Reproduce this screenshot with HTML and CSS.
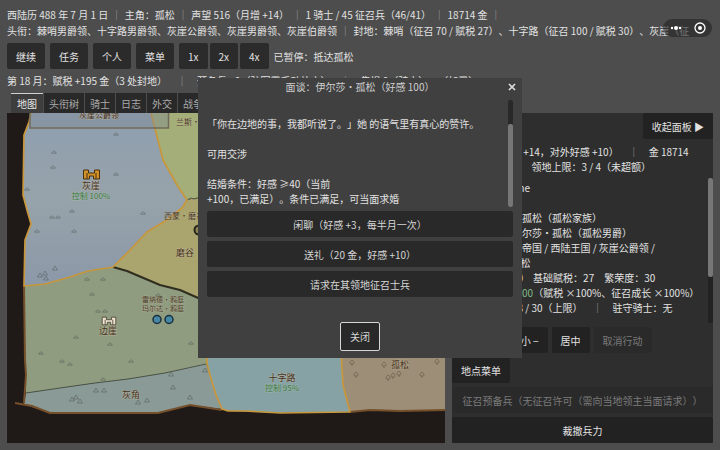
FILE: index.html
```
<!DOCTYPE html>
<html lang="zh-CN">
<head>
<meta charset="utf-8">
<meta name="viewport" content="width=device-width, initial-scale=1">
<title>西陆历</title>
<link rel="stylesheet" href="styles.css">
</head>
<body>
<header class="status">
  <p class="line">西陆历 488 年 7 月 1 日 <i>｜</i> 主角：孤松 <i>｜</i> 声望 516（月增 +14） <i>｜</i> 1 骑士 / 45 征召兵（46/41） <i>｜</i> 18714 金 <i>｜</i></p>
  <p class="line">头衔：棘哨男爵领、十字路男爵领、灰崖公爵领、灰崖男爵领、灰崖伯爵领 <i>｜</i> 封地：棘哨（征召 70 / 赋税 27）、十字路（征召 100 / 赋税 30）、灰崖（征</p>
</header>
<div class="toolbar">
  <button class="btn">继续</button>
  <button class="btn">任务</button>
  <button class="btn">个人</button>
  <button class="btn">菜单</button>
  <div class="speeds">
    <button class="btn">1x</button>
    <button class="btn">2x</button>
    <button class="btn">4x</button>
  </div>
  <span>已暂停：抵达孤松</span>
</div>
<p class="line news">第 18 月：赋税 +195 金（3 处封地）　<i>｜</i>　预备兵 +0（驻军需手动补充）　<i>｜</i>　集损 0（骑士）　（加冕）</p>
<nav class="tabs">
  <button class="tab active">地图</button>
  <button class="tab">头衔树</button>
  <button class="tab">骑士</button>
  <button class="tab">日志</button>
  <button class="tab">外交</button>
  <button class="tab">战争</button>
</nav>
<main class="main">
  <div class="map">
    <svg viewBox="7 113 438 330" preserveAspectRatio="xMinYMin slice" role="img" aria-label="地图">
      <defs>
        <linearGradient id="sky" x1="0" y1="0" x2="0" y2="1"><stop offset="0" stop-color="#8f9fb0"/><stop offset=".5" stop-color="#97a3aa"/><stop offset="1" stop-color="#8b98a8"/></linearGradient>
        <g id="hill" fill="none" stroke="#4d5550" stroke-opacity=".6" stroke-width=".8"><path d="M-2.5 1.2h5M-2 1C-1.5-1.6 1.5-1.6 2 1"/></g>
        <g id="peak" fill="none" stroke="#4d5550" stroke-opacity=".6" stroke-width=".8"><path d="M-2.5 2 0-2 2.500 2z"/></g>
        <g id="tree" fill="none" stroke="#5c4f3c" stroke-opacity=".7" stroke-width=".8"><path d="M0 3V1M0 1C-3 1-2.500-1 0-3 2.500-1 3 1 0 1z"/></g>
        <path id="fort" d="M-8-4.500h5v3h6v-3h5v9h-6v-3h-4v3h-6zM-4.500-1.500v6M4.500-1.500v6"/>
      </defs>
      <path fill="url(#sky)" d="M31 113 29 122 24 135 23 195 27 210 31 224 25 240 24 286 45 284 70 277 88 271 113 267 130 250 147 232 165 221 182 208 187 200 177 185 163 160 151 113z"/>
      <path fill="#a4ae78" d="M151 113 163 160 177 185 187 200 205 196V113z"/>
      <path fill="#aaa56f" d="M205 196 187 200 182 208 165 221 147 232 130 250 113 267 127 271 160 285 180 290 205 301z"/>
      <path fill="#8f9c80" d="M24 286 45 284 70 277 88 271 113 267 127 271 160 285 180 290 210 303V364L165 373 128 379 95 383 60 388 26 393 25 360z"/>
      <path fill="#8a9a97" d="M26 393 60 388 95 383 128 379 165 373 206 364 210 375 216 395 222 409 190 405 158 413H50L32 407 24 404z"/>
      <path fill="#87a2a5" d="M205 340 207 364 210 375 216 395 222 409 228 411 280 413 350 412 343 385 341 340z"/>
      <path fill="#9d8e77" d="M341 340 343 385 350 412 370 410 400 411 445 410V340z"/>
      <g fill="none" stroke-linejoin="round">
        <path stroke="#76502a" stroke-width="2" d="M24 286 25 360 26 375 24 403 M15 403 32 406 50 413H158L190 405 222 410 M350 412 370 410 400 411 445 410"/>
        <path stroke="#2f2d1e" stroke-width="2" d="M113 267 127 271 160 285 180 290 205 301"/>
        <path stroke="#4d5549" stroke-width="1" d="M26 393 60 388 95 383 128 379 165 373 206 364 M187 200 191 198 194 199 205 196"/>
        <path stroke="#c8963b" stroke-width="1.700" d="M31 113 29 122 24 135 23 195 27 210 31 224 25 240 24 286 45 284 70 277 88 271 113 267 130 250 147 232 165 221 182 208 187 200 177 185 163 160 151 113 M207 350 207 364 210 375 216 395 222 409 228 411 245 411 280 413 350 412 343 385 341 350"/>
      </g>
      <path d="M30 105H168.500V128H30z" fill="#7d8794" fill-opacity=".4" stroke="#71695b" stroke-width="1.500"/>
      <g>
        <use href="#hill" x="116" y="134"/><use href="#hill" x="54" y="152"/><use href="#hill" x="53" y="167"/><use href="#hill" x="116" y="174"/><use href="#hill" x="27" y="189"/><use href="#hill" x="72" y="211"/><use href="#hill" x="52" y="217"/><use href="#hill" x="58" y="217"/><use href="#hill" x="143" y="213"/><use href="#hill" x="37" y="231"/><use href="#hill" x="74" y="231"/>
        <use href="#hill" x="87" y="279"/><use href="#hill" x="103" y="279"/><use href="#hill" x="92" y="294"/><use href="#hill" x="98" y="311"/><use href="#hill" x="105" y="311"/><use href="#hill" x="76" y="337"/><use href="#hill" x="110" y="344"/><use href="#hill" x="41" y="353"/><use href="#hill" x="62" y="361"/><use href="#hill" x="70" y="364"/><use href="#hill" x="131" y="361"/><use href="#hill" x="191" y="343"/><use href="#hill" x="103" y="379"/><use href="#hill" x="158" y="295"/>
        <use href="#peak" x="40" y="275"/><use href="#peak" x="45" y="273"/><use href="#peak" x="55" y="268"/><use href="#peak" x="46" y="278"/><use href="#peak" x="72" y="399"/><use href="#peak" x="76" y="397"/><use href="#peak" x="80" y="401"/><use href="#peak" x="96" y="390"/><use href="#peak" x="104" y="390"/><use href="#peak" x="138" y="402"/><use href="#peak" x="147" y="400"/><use href="#peak" x="171" y="374"/><use href="#peak" x="173" y="387"/><use href="#peak" x="190" y="397"/><use href="#peak" x="205" y="370"/>
        <use href="#tree" x="352" y="363"/><use href="#tree" x="356" y="375"/><use href="#tree" x="384" y="365"/><use href="#tree" x="388" y="378"/><use href="#tree" x="393" y="376"/><use href="#tree" x="399" y="374"/><use href="#tree" x="422" y="375"/><use href="#tree" x="437" y="362"/>
      </g>
      <use href="#fort" x="91.500" y="174.500" fill="#d0912a" stroke="#49300e"/>
      <use href="#fort" x="109" y="321" transform="translate(16.350 48.150) scale(.85)" fill="#eee5d3" stroke="#4d4032"/>
      <g fill="#4687a5" stroke="#1b2f3c" stroke-width="1.500"><circle cx="157" cy="319.500" r="4"/><circle cx="169" cy="319.500" r="4"/></g>
      <circle cx="199" cy="230" r="4.500" fill="#8a8455" stroke="#26231a" stroke-width="2"/>
      <g class="place">
        <text x="99" y="118" class="small">灰崖公爵领</text>
        <text x="91" y="189">灰崖</text>
        <text x="108" y="334">边崖</text>
        <text x="131" y="398">灰角</text>
        <text x="185" y="256">磨谷</text>
        <text x="282" y="381">十字路</text>
        <text x="400" y="368">孤松</text>
      </g>
      <g class="person">
        <text x="196" y="125">兰斯・麦田</text>
        <text x="184" y="219">西蒙・磨谷</text>
        <g class="court">
          <text x="163" y="302">雷纳德・鸦庭</text>
          <text x="163" y="311">玛尔达・鸦庭</text>
        </g>
      </g>
      <g class="control">
        <text x="91" y="199">控制 100%</text>
        <text x="282" y="391">控制 95%</text>
      </g>
    </svg>
  </div>
  <section class="panel">
    <button class="btn collapse">收起面板 ▶</button>
    <div class="summary">
      <p class="line">声望 516（每月 +14，对外好感 +10）　<i>｜</i>　金 18714</p>
      <p class="line">骑士上限：1 / 3　领地上限：3 / 4（未超额）</p>
    </div>
    <div class="details">
      <div class="text">
        <p class="line">当前位置：Home</p>
        <p class="line">&nbsp;</p>
        <p class="line">本地统治家族：孤松（孤松家族）</p>
        <p class="line">当地的领主：伊尔莎・孤松（孤松男爵）</p>
        <p class="line">法理归属：西陆帝国 / 西陆王国 / 灰崖公爵领 /</p>
        <p class="line">灰崖伯爵领 / 孤松</p>
        <p class="line">当地征召额：70　基础赋税：27　繁荣度：30</p>
        <p class="line">当地 控制度： <b>100</b>（赋税 ×100%、征召成长 ×100%）</p>
        <p class="line">征召预备兵：28 / 30（上限）　<i>｜</i>　驻守骑士：无</p>
      </div>
      <div class="track"><div class="thumb"></div></div>
    </div>
    <div class="actions">
      <button class="btn">放大 +</button>
      <button class="btn">缩小 −</button>
      <button class="btn">居中</button>
      <button class="btn" disabled>取消行动</button>
    </div>
    <button class="btn place-menu">地点菜单</button>
    <button class="btn" disabled>征召预备兵（无征召许可（需向当地领主当面请求））</button>
    <button class="btn">裁撤兵力</button>
  </section>
</main>

<div class="capsule">
  <button aria-label="更多"><svg width="14" height="8" viewBox="0 0 14 8"><circle cx="3" cy="4" r="1.200"/><circle cx="7" cy="4" r="2"/><circle cx="11" cy="4" r="1.200"/></svg></button>
  <button aria-label="退出"><svg width="12" height="12" viewBox="0 0 12 12"><circle cx="6" cy="6" r="5" fill="none" stroke="#fff" stroke-width="1.300"/><circle cx="6" cy="6" r="2"/></svg></button>
</div>

<div class="dialog" role="dialog" aria-labelledby="talk-title">
  <h1 id="talk-title">面谈：伊尔莎・孤松（好感 100）</h1>
  <button class="close" aria-label="关闭面谈"><svg width="8" height="8" viewBox="0 0 8 8"><path d="M1 1 7 7M7 1 1 7" stroke="#ddd" stroke-width="1.700"/></svg></button>
  <div class="speech">
    <div class="text">
      <p class="line">「你在边地的事，我都听说了。」她 的语气里有真心的赞许。</p>
      <p class="line">&nbsp;</p>
      <p class="line">可用交涉</p>
      <p class="line">&nbsp;</p>
      <p class="line">结婚条件：好感 ≥40（当前</p>
      <p class="line">+100，已满足）。条件已满足，可当面求婚</p>
    </div>
    <div class="track"><div class="thumb"></div></div>
  </div>
  <div class="choices">
    <button class="btn">闲聊（好感 +3，每半月一次）</button>
    <button class="btn">送礼（20 金，好感 +10）</button>
    <button class="btn">请求在其领地征召士兵</button>
  </div>
  <button class="btn dismiss">关闭</button>
</div>
</body>
</html>
```
FILE: styles.css
```
* { box-sizing: border-box; }

body {
  margin: 0;
  min-height: 100vh;
  padding: 7px;
  display: flex;
  flex-direction: column;
  overflow: hidden;
  background: #4d4d4d;
  color: #e2e2e2;
  font: 10px/15px "Noto Sans CJK SC", sans-serif;
  text-spacing-trim: space-all;
}

p, h1 { margin: 0; }
i { font-style: normal; color: #a2a2a2; }
b { font-weight: 400; color: #82bd86; }

button {
  font: inherit;
  color: inherit;
  text-spacing-trim: inherit;
  border: 0;
  padding: 0;
  background: none;
}

.line {
  min-height: 15px;
  white-space: nowrap;
}

.status {
  display: grid;
  gap: 1px;
}

.status i { margin: 0 1px; }

.btn {
  height: 26px;
  padding: 0 9px;
  border-radius: 2px;
  background: #2b2b2b;
  white-space: nowrap;
  flex: none;
}

.toolbar {
  display: flex;
  align-items: center;
  gap: 5px;
  margin-top: 5px;
}

.speeds { display: flex; gap: 2px; }

.news { margin-top: 4px; }

.tabs {
  display: flex;
  gap: 1px;
  margin: 5px 0 0 4px;
}

.tab {
  height: 20px;
  padding: 0 5px;
  background: #292929;
  color: #a9a9a9;
  border-top: 1px solid #292929;
}

.tab.active {
  padding: 0 6px;
  background: #3e3e3e;
  color: #e6e6e6;
  border-top-color: #d0d0d0;
}

.main {
  flex: 1;
  display: grid;
  grid-template-columns: minmax(0, 1fr) 261px;
  gap: 7px;
}

.map {
  position: relative;
  overflow: hidden;
  background: #1f1a17;
}

.map svg {
  position: absolute;
  width: 100%;
  height: 100%;
}

.map text {
  text-anchor: middle;
  paint-order: stroke;
  stroke-width: 1px;
}

.place {
  font-size: 9px;
  fill: #46321f;
  stroke: #c9bda280;
}

.place .small { font-size: 8px; }

.person {
  font-size: 8px;
  fill: #4c3b2c;
  stroke: #c9bda260;
}

.person .court { font-size: 7px; }

.control {
  font-size: 8px;
  fill: #3c7843;
  stroke: #b8cdb060;
}

.panel {
  display: flex;
  flex-direction: column;
  gap: 4px;
  background: #2e2e2e;
}

.panel .btn { background: #222; }

.panel .btn:disabled {
  background: #2a2a2a;
  color: #7a7a7a;
}

.panel .collapse { align-self: flex-end; }
.panel .place-menu { align-self: flex-start; }

.summary { padding-top: 1px; }

.details {
  flex: 1;
  display: flex;
  justify-content: space-between;
}

.details .text { padding-top: 2px; }

.track {
  width: 5px;
  flex: none;
  border-radius: 2px;
  background: #222;
}

.thumb {
  border-radius: 2px;
  background: #777;
}

.details .thumb { height: 68%; }

.actions {
  display: flex;
  gap: 4px;
}

.capsule {
  position: absolute;
  top: 19px;
  right: 8px;
  width: 49px;
  height: 18px;
  display: flex;
  align-items: center;
  justify-content: space-around;
  border-radius: 9px;
  background: #24242499;
}

.capsule svg {
  display: block;
  fill: #fff;
}

.dialog {
  position: absolute;
  top: 78px;
  left: 50%;
  width: 45%;
  transform: translateX(-50%);
  padding: 1px 9px 7px;
  display: flex;
  flex-direction: column;
  background: #404040;
}

.dialog h1 {
  font-size: 10px;
  font-weight: 400;
  text-align: center;
  color: #cfcfcf;
}

.close {
  position: absolute;
  top: 5px;
  right: 6px;
}

.close svg { display: block; }

.speech {
  display: flex;
  justify-content: space-between;
  margin-top: 6px;
}

.speech .text { padding: 16px 0 1px; }

.speech .track {
  display: flex;
  align-items: flex-end;
  background: #292929;
}

.speech .thumb {
  width: 100%;
  height: 78%;
}

.choices {
  display: grid;
  gap: 4px;
  margin-top: 4px;
}

.dialog .btn { background: #292929; color: #d6d6d6; }

.dialog .dismiss {
  align-self: center;
  height: 29px;
  margin-top: 25px;
  border: 1px solid #d6d6d6;
}
```
